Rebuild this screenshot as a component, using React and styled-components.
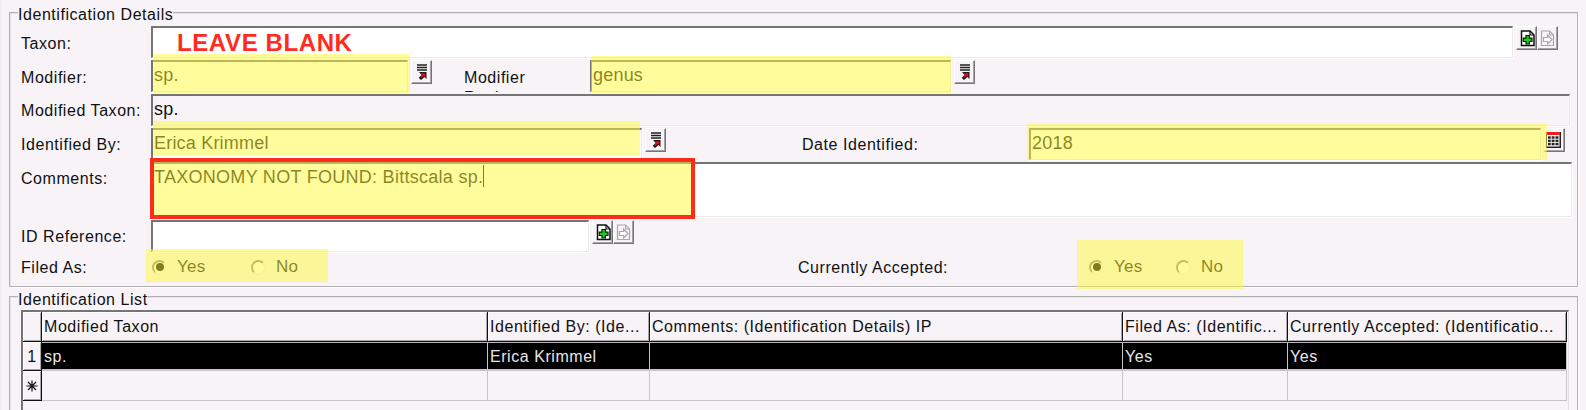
import React from "react";
import styled, { createGlobalStyle, css } from "styled-components";

const face = "#f7f3f7";
const dark = "#777477";
const yellow = "rgba(255, 250, 58, 0.5)";
const red = "#ff2b1c";

const GlobalStyle = createGlobalStyle`
  * { box-sizing: border-box; }
  body {
    margin: 0;
    background: ${face};
    color: #111;
    font-family: "Liberation Sans", Arial, sans-serif;
    font-size: 16px;
    line-height: 20px;
    letter-spacing: 0.55px;
  }
`;

const Screen = styled.main`
  width: 1586px;
  height: 410px;
  overflow: hidden;
  padding: 12px 8px 0 7px;
  border-left: 2px solid #efebef;
`;

const Panel = styled.section`
  height: ${(p) => p.$height}px;
  margin-bottom: 9px;
  padding-left: 11px;
  border: 1px solid #b3b0b3;
  box-shadow: 1px 1px 0 #fff, inset 1px 1px 0 #e6e3e6;
`;

const Legend = styled.h2`
  width: max-content;
  margin: ${(p) => p.$rise}px 0 ${(p) => p.$gap}px -3px;
  background: ${face};
  font-size: 16px;
  font-weight: 400;
  line-height: 20px;
`;

const Row = styled.div`
  display: flex;
  align-items: flex-start;
  height: ${(p) => p.$height || 34}px;
`;

const Label = styled.label`
  flex: none;
  width: ${(p) => p.$width || 130}px;
  height: ${(p) => p.$height || 32}px;
  margin-left: ${(p) => p.$before || 0}px;
  padding-top: ${(p) => p.$drop ?? 7}px;
  overflow: hidden;
  white-space: nowrap;
`;

const Field = styled.div`
  position: relative;
  flex: none;
  width: ${(p) => p.$width}px;
  height: ${(p) => p.$height || 32}px;
  padding-left: 1px;
  border: 2px solid;
  border-color: ${dark} #ebe8eb #ebe8eb ${dark};
  border-right-width: 1px;
  border-bottom-width: 1px;
  box-shadow: 1px 1px 0 #fff;
  background: ${(p) => (p.$readOnly ? face : "#fff")};
  font-size: 18px;
  line-height: 27px;
  letter-spacing: ${(p) => p.$spacing ?? 0.2}px;
  white-space: nowrap;
`;

const Highlight = styled.span`
  position: absolute;
  z-index: 2;
  top: ${(p) => p.$top}px;
  left: ${(p) => p.$left}px;
  width: ${(p) => p.$width}px;
  height: ${(p) => p.$height}px;
  background: ${yellow};
  ${(p) => p.$framed && css`
    border: 4px solid ${red};
    background-clip: padding-box;
  `}
`;

const Note = styled.strong`
  display: block;
  padding: 1px 0 0 23px;
  color: ${red};
  font-size: 24px;
  line-height: 27px;
  letter-spacing: 0.6px;
`;

const Caret = styled.i`
  display: inline-block;
  width: 1px;
  height: 22px;
  margin-top: 1px;
  background: #000;
  vertical-align: top;
`;

const Tools = styled.div`
  display: flex;
  flex: none;
  margin: 0 0 0 ${(p) => p.$gap ?? 3}px;
`;

const ToolButton = styled.button`
  width: 21px;
  height: 24px;
  padding: 0;
  border: 1px solid;
  border-color: #fff #777477 #777477 #fff;
  box-shadow: inset -1px -1px 0 #a6a3a6;
  background: ${face};
  svg { display: block; margin: -1px; }
`;

const RadioGroup = styled.div`
  position: relative;
  display: flex;
  flex: none;
  align-items: center;
  height: 26px;
  padding-left: ${(p) => p.$inset || 0}px;
`;

const Option = styled.label`
  display: flex;
  align-items: center;
  gap: 10px;
  width: ${(p) => p.$width}px;
  font-size: 17px;
  letter-spacing: 0.3px;
`;

const Dot = styled.span`
  display: grid;
  place-items: center;
  flex: none;
  width: 15px;
  height: 15px;
  border: 2px solid;
  border-color: #888588 #f0edf0 #f0edf0 #888588;
  border-radius: 50%;
  background: #fff;
  &::after {
    content: "";
    width: 8px;
    height: 8px;
    border-radius: 50%;
    background: ${(p) => (p.$on ? "#000" : "transparent")};
  }
`;

const Table = styled.div`
  width: 1548px;
  height: 110px;
  margin-left: 0;
  border: 2px solid;
  border-color: ${dark} #e5e2e5 transparent ${dark};
  border-right-width: 1px;
`;

const Line = styled.div`
  display: grid;
  grid-template-columns: 19px 446px 162px 473px 165px 279px;
  height: ${(p) => p.$height}px;
`;

const bevel = css`
  border-right: 1px solid #111;
  border-bottom: 1px solid #111;
  box-shadow: inset 1px 1px 0 #fff, inset -1px -1px 0 #aaa7aa;
`;

const HeadCell = styled.div`
  ${bevel}
  padding: 5px 2px 0 2px;
  white-space: nowrap;
  overflow: hidden;
`;

const Stub = styled.div`
  ${bevel}
  padding-top: ${(p) => p.$drop}px;
  text-align: center;
`;

const Cell = styled.div`
  padding: 4px 2px 0 2px;
  border-right: 1px solid #c8c5c8;
  border-bottom: ${(p) => (p.$selected ? 2 : 1)}px solid #c8c5c8;
  ${(p) => p.$selected && css`
    border-top: 1px solid #b8b5b8;
    background: #000;
    color: #e8e5e8;
  `}
`;

const LookupIcon = () => (
  <svg width="21" height="24" viewBox="0 0 21 24">
    <path d="M6 5h10M6 7.5h10M6 10h10" stroke="#222" strokeWidth="1.3" />
    <path d="M8 12h7.5v7l-2-2-3.5 3-2.3-2.3 3-2.7z" fill="#251414" />
    <path d="M10.5 13.3h3.7v3.6l-1.5-1.3-3 2.8" fill="#d91420" />
  </svg>
);

const AddIcon = () => (
  <svg width="21" height="24" viewBox="0 0 21 24">
    <path d="M5.5 5h8.5l4 4v10.5H5.5z" fill="#fff" stroke="#111" strokeWidth="1.5" />
    <path d="M14 5v4h4" fill="none" stroke="#111" strokeWidth="1.2" />
    <path d="M10 9.5h3.4v2.6H16v3.4h-2.6V18H10v-2.5H7.3v-3.4H10z" fill="#20c820" stroke="#062006" strokeWidth="1.2" />
  </svg>
);

const GoIcon = () => (
  <svg width="21" height="24" viewBox="0 0 21 24">
    <path d="M4.5 5h8l4 4v10.5h-12z" fill="#f7f3f7" stroke="#aaa7aa" strokeWidth="1.2" />
    <path d="M12.5 5v4h4" fill="none" stroke="#aaa7aa" />
    <path d="M6.5 11.5h4.2V9l4.3 4.5-4.3 4.5v-2.5H6.5z" fill="#fff" stroke="#aaa7aa" strokeWidth="1.2" />
  </svg>
);

const CalendarIcon = () => (
  <svg width="21" height="24" viewBox="0 0 21 24">
    <path d="M2 4h15v16H2z" fill="#222" />
    <path d="M2 4h14v3H2z" fill="#f51c20" />
    <path d="M3 7h12.5v11.5H3z" fill="#fff" />
    <path d="M4 8.3h10.5v9H4z" fill="#222" />
    <path d="M7.2 8v10M11 8v10M3.5 11.2h11.5M3.5 14.4h11.5" stroke="#fff" strokeWidth=".9" />
  </svg>
);

const StarIcon = () => (
  <svg width="12" height="12" viewBox="0 0 12 12">
    <path d="M6 .5v11M.5 6h11M2 2l8 8M10 2l-8 8" stroke="#111" strokeWidth="1.2" />
  </svg>
);

const Lookup = ({ gap }) => (
  <Tools $gap={gap}><ToolButton><LookupIcon /></ToolButton></Tools>
);

const RecordTools = () => (
  <Tools>
    <ToolButton><AddIcon /></ToolButton>
    <ToolButton><GoIcon /></ToolButton>
  </Tools>
);

const YesNo = ({ yesWidth, inset, children }) => (
  <RadioGroup $inset={inset}>
    <Option $width={yesWidth}><Dot $on />Yes</Option>
    <Option $width={60}><Dot />No</Option>
    {children}
  </RadioGroup>
);

const columns = [
  "Modified Taxon",
  "Identified By: (Ide...",
  "Comments: (Identification Details) IP",
  "Filed As: (Identific...",
  "Currently Accepted: (Identificatio...",
];
const record = ["sp.", "Erica Krimmel", "", "Yes", "Yes"];

export default function App() {
  return (
    <Screen>
      <GlobalStyle />
      <Panel $height={275}>
        <Legend $rise={-8} $gap={1}>Identification Details</Legend>
        <Row>
          <Label $drop={8}>Taxon:</Label>
          <Field $width={1362}><Note>LEAVE BLANK</Note></Field>
          <RecordTools />
        </Row>
        <Row>
          <Label $drop={8}>Modifier:</Label>
          <Field $width={257}>
            sp.
            <Highlight $left={0} $top={-8} $width={257} $height={39} />
          </Field>
          <Lookup gap={3} />
          <Label $before={32} $width={126} $drop={8}>Modifier<br />Rank:</Label>
          <Field $width={361}>
            genus
            <Highlight $left={-1} $top={-6} $width={360} $height={37} />
          </Field>
          <Lookup />
        </Row>
        <Row>
          <Label>Modified Taxon:</Label>
          <Field $width={1419} $readOnly>sp.</Field>
        </Row>
        <Row>
          <Label>Identified By:</Label>
          <Field $width={491}>
            Erica Krimmel
            <Highlight $left={0} $top={-9} $width={487} $height={35} />
          </Field>
          <Lookup />
          <Label $before={136} $width={227}>Date Identified:</Label>
          <Field $width={512}>
            2018
            <Highlight $left={-4} $top={-6} $width={520} $height={36} />
          </Field>
          <Tools><ToolButton><CalendarIcon /></ToolButton></Tools>
        </Row>
        <Row $height={58}>
          <Label>Comments:</Label>
          <Field $width={1421} $height={55} $spacing={0.28}>
            TAXONOMY NOT FOUND: Bittscala sp.<Caret />
            <Highlight $framed $left={-3} $top={-6} $width={545} $height={61} />
          </Field>
        </Row>
        <Row>
          <Label>ID Reference:</Label>
          <Field $width={438} />
          <RecordTools />
        </Row>
        <Row $height={32}>
          <Label $drop={4}>Filed As:</Label>
          <YesNo yesWidth={99} inset={1}>
            <Highlight $left={-5} $top={-5} $width={182} $height={33} />
          </YesNo>
          <Label $before={487} $width={291} $drop={4}>Currently Accepted:</Label>
          <YesNo yesWidth={87}>
            <Highlight $left={-12} $top={-14} $width={166} $height={49} />
          </YesNo>
        </Row>
      </Panel>
      <Panel $height={140}>
        <Legend $rise={-7} $gap={0}>Identification List</Legend>
        <Table>
          <Line $height={30}>
            <Stub />
            {columns.map((title) => <HeadCell key={title}>{title}</HeadCell>)}
          </Line>
          <Line $height={29}>
            <Stub $drop={5}>1</Stub>
            {record.map((value, i) => <Cell key={i} $selected>{value}</Cell>)}
          </Line>
          <Line $height={30}>
            <Stub $drop={6}><StarIcon /></Stub>
            {record.map((_, i) => <Cell key={i} />)}
          </Line>
        </Table>
      </Panel>
    </Screen>
  );
}
